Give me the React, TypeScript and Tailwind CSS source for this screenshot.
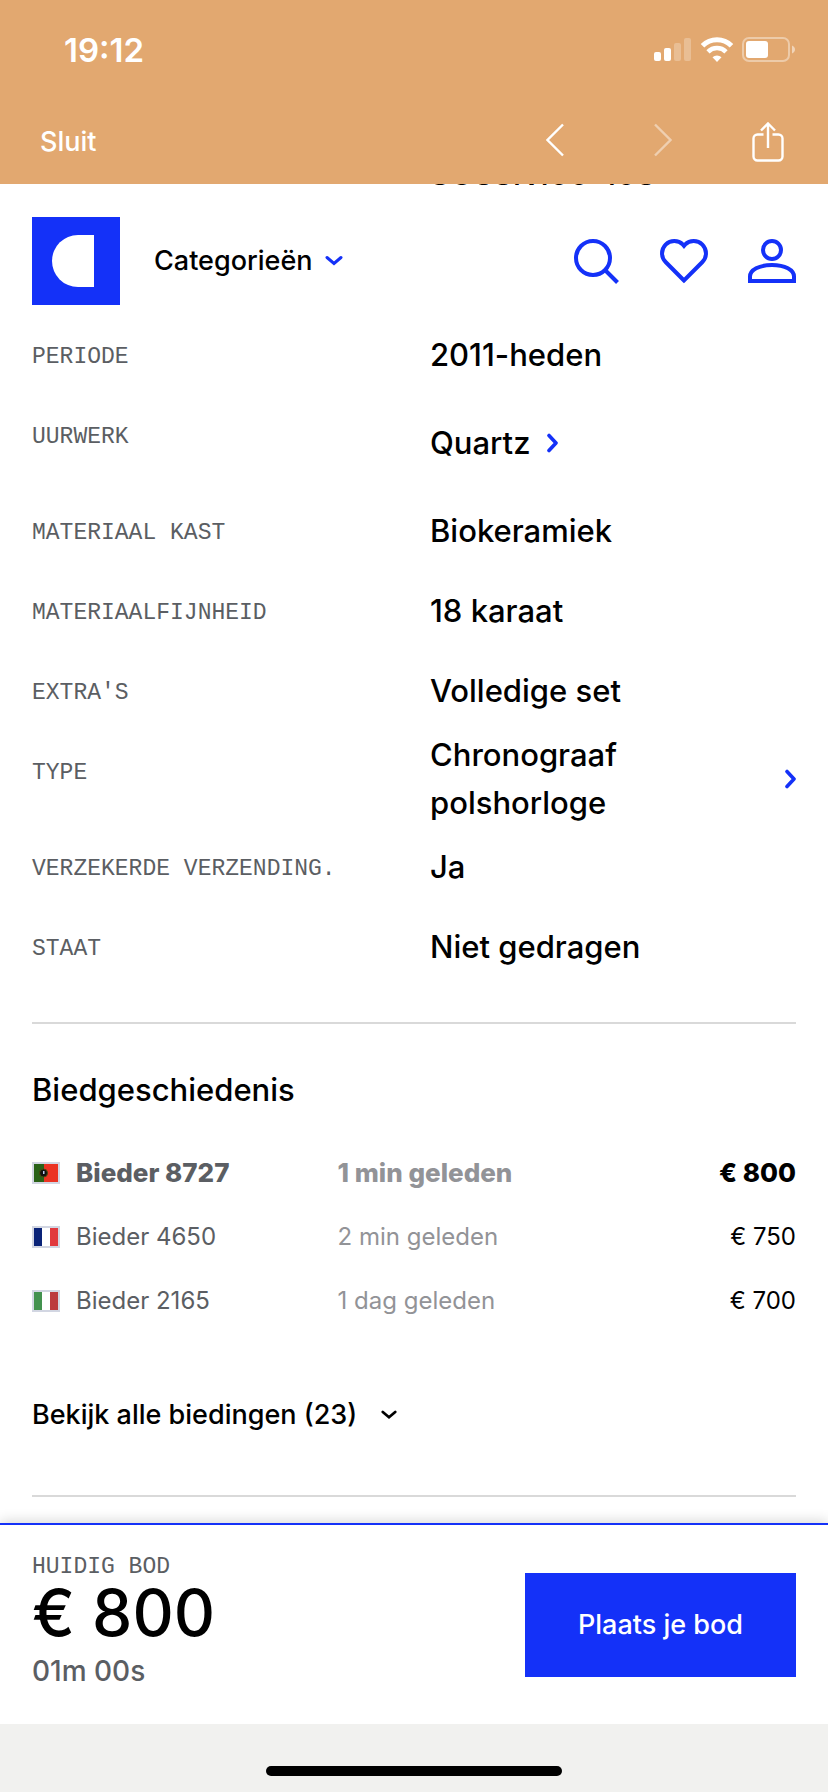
import type { ReactNode } from "react";

type Spec = {
  label: string;
  value: string;
  href?: string;
};

type Bid = {
  bidder: string;
  time: string;
  amount: string;
  flag: ReactNode;
  leading?: boolean;
};

const specs: Spec[] = [
  { label: "Periode", value: "2011-heden" },
  { label: "Uurwerk", value: "Quartz", href: "#quartz" },
  { label: "Materiaal kast", value: "Biokeramiek" },
  { label: "Materiaalfijnheid", value: "18 karaat" },
  { label: "Extra's", value: "Volledige set" },
  { label: "Type", value: "Chronograaf polshorloge", href: "#chronograaf" },
  { label: "Verzekerde verzending.", value: "Ja" },
  { label: "Staat", value: "Niet gedragen" },
];

const bids: Bid[] = [
  {
    bidder: "Bieder 8727",
    time: "1 min geleden",
    amount: "€ 800",
    leading: true,
    flag: (
      <>
        <path fill="#2a6218" d="M0 0h10v18H0z" />
        <path fill="#eb3323" d="M10 0h14v18H10z" />
        <circle cx="9.500" cy="9" r="4" fill="#111" stroke="#4d4a10" />
        <path fill="#b9c4e8" d="M9 7h1.500v3H9z" />
      </>
    ),
  },
  {
    bidder: "Bieder 4650",
    time: "2 min geleden",
    amount: "€ 750",
    flag: (
      <>
        <path fill="#0a2378" d="M0 0h8v18H0z" />
        <path fill="#fff" d="M8 0h8v18H8z" />
        <path fill="#e1393d" d="M16 0h8v18h-8z" />
      </>
    ),
  },
  {
    bidder: "Bieder 2165",
    time: "1 dag geleden",
    amount: "€ 700",
    flag: (
      <>
        <path fill="#43924f" d="M0 0h8v18H0z" />
        <path fill="#fff" d="M8 0h8v18H8z" />
        <path fill="#bc3a3e" d="M16 0h8v18h-8z" />
      </>
    ),
  },
];

function ChevronRight() {
  return (
    <svg viewBox="0 0 12 20" className="h-5 w-3 shrink-0" fill="none" aria-hidden="true">
      <path d="M3 2.500 10 10l-7 7.500" stroke="#1431f8" strokeWidth="3.600" strokeLinecap="round" strokeLinejoin="round" />
    </svg>
  );
}

function ChevronDown({ className }: { className: string }) {
  return (
    <svg viewBox="0 0 18 12" className={className} fill="none" aria-hidden="true">
      <path d="m2 2.500 7 6 7-6" stroke="currentColor" strokeWidth="3" strokeLinecap="round" />
    </svg>
  );
}

function StatusBar() {
  return (
    <div className="flex h-[100px] items-center justify-between pr-8 pl-16 text-white">
      <span className="text-[33px] leading-10 font-semibold">19:12</span>
      <div className="flex items-center gap-2">
        {/* signal */}
        <svg viewBox="0 0 38 24" className="h-6 w-[38px]" fill="currentColor" aria-hidden="true">
          <rect x="0" y="14" width="7" height="9" rx="2" />
          <rect x="10" y="10" width="7" height="13" rx="2" />
          <rect x="20" y="5" width="7" height="18" rx="2" opacity=".25" />
          <rect x="30" y="0" width="7" height="23" rx="2" opacity=".25" />
        </svg>
        {/* wifi */}
        <svg viewBox="0 0 34 26" className="h-[26px] w-[34px]" fill="none" stroke="currentColor" aria-hidden="true">
          <path d="M2.500 8.800a20.500 20.500 0 0 1 29 0" strokeWidth="5" />
          <path d="M8 14.800a12.700 12.700 0 0 1 18 0" strokeWidth="4.500" />
          <path d="M17 25l-4.500-4.700a6.500 6.500 0 0 1 9 0z" fill="currentColor" stroke="none" />
        </svg>
        {/* battery */}
        <svg viewBox="0 0 54 26" className="h-[26px] w-[54px]" fill="none" aria-hidden="true">
          <rect x="1" y="1" width="46" height="23" rx="6" stroke="#fff" strokeWidth="2" opacity=".4" />
          <rect x="4" y="4" width="22" height="17" rx="3" fill="#fff" />
          <path d="M50 8.500c4 1.500 4 6.500 0 8z" fill="#fff" opacity=".5" />
        </svg>
      </div>
    </div>
  );
}

function BrowserToolbar() {
  return (
    <div className="flex h-[84px] items-center justify-between pr-11 pl-10 text-white">
      <button type="button" className="text-[27px] leading-9 font-medium">
        Sluit
      </button>
      <div className="flex items-center gap-20">
        <div className="flex items-center gap-[90px] pb-1">
          <button type="button" aria-label="Vorige">
            <svg viewBox="0 0 18 34" className="h-[34px] w-[18px]" fill="none" stroke="currentColor" strokeWidth="2.400" aria-hidden="true">
              <path d="M17 1.500 1.500 17 17 32.500" />
            </svg>
          </button>
          <button type="button" aria-label="Volgende" className="text-white/45">
            <svg viewBox="0 0 18 34" className="h-[34px] w-[18px]" fill="none" stroke="currentColor" strokeWidth="2.400" aria-hidden="true">
              <path d="M1 1.500 16.500 17 1 32.500" />
            </svg>
          </button>
        </div>
        <button type="button" aria-label="Deel">
          <svg viewBox="0 0 32 40" className="h-10 w-8" fill="none" stroke="currentColor" strokeWidth="2.400" aria-hidden="true">
            <path d="M11.500 12.500H5.500a4 4 0 0 0-4 4v18a4 4 0 0 0 4 4h21a4 4 0 0 0 4-4v-18a4 4 0 0 0-4-4h-6" />
            <path d="M16 26V1.500M9 8.500l7-7 7 7" />
          </svg>
        </button>
      </div>
    </div>
  );
}

function SiteHeader() {
  return (
    <header className="flex items-center justify-between px-8 pt-[33px] pb-[10px]">
      <div className="flex items-center gap-[34px]">
        <a href="#home" aria-label="Home">
          <svg viewBox="0 0 88 88" className="h-[88px] w-[88px]" aria-hidden="true">
            <path fill="#1431f8" d="M0 0h88v88H0z" />
            <path fill="#fff" d="M62 18H46a26 26 0 0 0 0 52h16z" />
          </svg>
        </a>
        <button type="button" className="flex items-center gap-3 text-[27px] leading-8 font-medium">
          Categorieën
          <ChevronDown className="h-3 w-[18px] text-[#1431f8]" />
        </button>
      </div>
      <nav className="flex items-center gap-10 text-[#1431f8]">
        <a href="#zoeken" aria-label="Zoeken">
          <svg viewBox="0 0 48 48" className="h-12 w-12" fill="none" stroke="currentColor" strokeWidth="4" aria-hidden="true">
            <circle cx="21" cy="21" r="17" />
            <path d="m33 33 12.500 12.500" />
          </svg>
        </a>
        <a href="#favorieten" aria-label="Favorieten">
          <svg viewBox="0 0 48 48" className="h-12 w-12" fill="none" stroke="currentColor" strokeWidth="4" aria-hidden="true">
            <path d="M24 43.500 5.600 25a12.400 12.400 0 0 1 0-17.400 12.300 12.300 0 0 1 17.400 0l1 1.200 1-1.200a12.300 12.300 0 0 1 17.400 0 12.400 12.400 0 0 1 0 17.400z" />
          </svg>
        </a>
        <a href="#profiel" aria-label="Profiel">
          <svg viewBox="0 0 48 48" className="h-12 w-12" fill="none" stroke="currentColor" strokeWidth="4" aria-hidden="true">
            <circle cx="24" cy="13" r="9" />
            <path d="M2 44v-4.500C2 33 11 28 24 28s22 5 22 11.500V44z" />
          </svg>
        </a>
      </nav>
    </header>
  );
}

function SpecRow({ label, value, href }: Spec) {
  return (
    <div className="grid grid-cols-2 gap-8">
      <dt className="pt-[26px] pb-[22px] font-['Liberation_Mono',monospace] text-[23px] leading-8 text-[#5b5e63] uppercase">
        {label}
      </dt>
      {href ? (
        <dd className="flex h-24 items-center text-[31px] leading-[48px] font-medium">
          <a href={href} className="flex items-center gap-4">
            <span>{value}</span>
            <ChevronRight />
          </a>
        </dd>
      ) : (
        <dd className="py-4 text-[31px] leading-[48px] font-medium">{value}</dd>
      )}
    </div>
  );
}

function BidHistory() {
  return (
    <section className="mx-8 border-b-2 border-[#d9d9d9] pt-10 pb-16">
      <h2 className="text-[31px] leading-[52px] font-medium">Biedgeschiedenis</h2>
      <table className="mt-[25px] w-full table-fixed leading-8">
        <tbody>
          {bids.map((bid) => (
            <tr key={bid.bidder} className={bid.leading ? "h-16 text-[26px] font-extrabold" : "h-16 text-[24px]"}>
              <td className="w-[40%] text-[#5b5e63]">
                <span className="flex items-center gap-4">
                  <svg viewBox="0 0 24 18" className="h-[22px] w-7 shrink-0 border-2 border-[#d2d6e2]" aria-hidden="true">
                    {bid.flag}
                  </svg>
                  {bid.bidder}
                </span>
              </td>
              <td className="text-[#929397]">{bid.time}</td>
              <td className="w-[20%] text-right">{bid.amount}</td>
            </tr>
          ))}
        </tbody>
      </table>
      <button type="button" className="mt-[66px] flex items-center gap-6 text-[27px] leading-8 font-medium">
        Bekijk alle biedingen (23)
        <ChevronDown className="h-3 w-4" />
      </button>
    </section>
  );
}

function BidBar() {
  return (
    <aside className="mt-auto flex items-center justify-between border-t-2 border-[#1431f8] bg-white px-8 pt-7 pb-[27px] shadow-[0_-2px_12px_rgba(0,0,0,0.16)]">
      <div>
        <p className="font-['Liberation_Mono',monospace] text-[23px] leading-7 text-[#5b5e63] uppercase">Huidig bod</p>
        <p className="text-[64px] leading-[64px] font-medium">€ 800</p>
        <p className="text-[28px] leading-[52px] font-medium text-[#5b5e63]">01m 00s</p>
      </div>
      <button type="button" className="bg-[#1431f8] px-[53px] py-9 text-[27px] leading-8 font-medium text-white">
        Plaats je bod
      </button>
    </aside>
  );
}

export default function App() {
  return (
    <div className="flex min-h-screen flex-col bg-white font-['Inter','Liberation_Sans',sans-serif] text-black">
      <div className="relative z-10 bg-[#e2a870]">
        <StatusBar />
        <BrowserToolbar />
      </div>

      {/* reference number, scrolled almost fully under the toolbar */}
      <div className="-mt-7 grid h-7 grid-cols-2 gap-8 px-8">
        <span className="col-start-2 text-[31px] leading-9 font-medium">SO33N100-103</span>
      </div>

      <SiteHeader />

      <main>
        <dl className="mx-8 border-b-2 border-[#d9d9d9] pb-[35px]">
          {specs.map((spec) => (
            <SpecRow key={spec.label} {...spec} />
          ))}
        </dl>
        <BidHistory />
      </main>

      <BidBar />

      {/* home indicator */}
      <footer className="flex h-[68px] items-end justify-center bg-[#f1f1ef] pb-4">
        <div className="h-[10px] w-[296px] rounded-full bg-black" />
      </footer>
    </div>
  );
}
